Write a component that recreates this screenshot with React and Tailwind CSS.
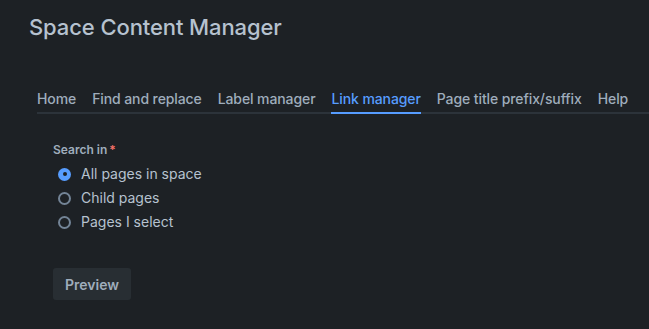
import React from "react";

const tabs = ["Home", "Find and replace", "Label manager", "Link manager", "Page title prefix/suffix", "Help"];
const options = ["All pages in space", "Child pages", "Pages I select"];

export default function App() {
  return (
    <div
      className="w-full h-[329px] bg-[#1D2125] overflow-hidden"
      style={{ fontFamily: "Inter, 'Noto Sans', sans-serif" }}
    >
      <h1 className="pl-[29px] pt-[13px] text-[22px] leading-[28px] font-medium text-[#B6C2CF] tracking-[-0.1px]">
        Space Content Manager
      </h1>

      <div className="relative mt-[48px] ml-[29px] flex">
        <div className="absolute left-[8px] right-0 bottom-0 h-[2px] bg-[#2C333A]" />
        {tabs.map((t) => {
          const active = t === "Link manager";
          return (
            <div key={t} className="relative px-[8px] pb-[5px]">
              <span
                className={
                  "block text-[14px] leading-[20px] font-medium whitespace-nowrap tracking-[-0.1px] " +
                  (active ? "text-[#579DFF]" : "text-[#9FADBC]")
                }
              >
                {t}
              </span>
              {active && <div className="absolute left-[8px] right-[8px] bottom-0 h-[2px] bg-[#579DFF] z-10" />}
            </div>
          );
        })}
      </div>

      <div className="pl-[53px] pt-[28px]">
        <div className="text-[12px] leading-[16px] font-semibold text-[#9FADBC]">
          Search in<span className="text-[#F87168] ml-[2px]">*</span>
        </div>
        <div className="mt-[4px] flex flex-col pl-[5px]">
          {options.map((o, i) => (
            <div key={o} className="flex items-center h-[24px]">
              {i === 0 ? (
                <span className="w-[13px] h-[13px] rounded-full bg-[#579DFF] flex items-center justify-center">
                  <span className="w-[4px] h-[4px] rounded-full bg-[#1D2125]" />
                </span>
              ) : (
                <span className="w-[13px] h-[13px] rounded-full border-2 border-[#738496]" />
              )}
              <span className="ml-[10px] text-[14px] leading-[20px] text-[#B6C2CF]">{o}</span>
            </div>
          ))}
        </div>
        <button className="mt-[34px] h-[32px] px-[12px] rounded-[3px] bg-[#282E33] text-[14px] font-semibold text-[#9FADBC]">
          Preview
        </button>
      </div>
    </div>
  );
}
